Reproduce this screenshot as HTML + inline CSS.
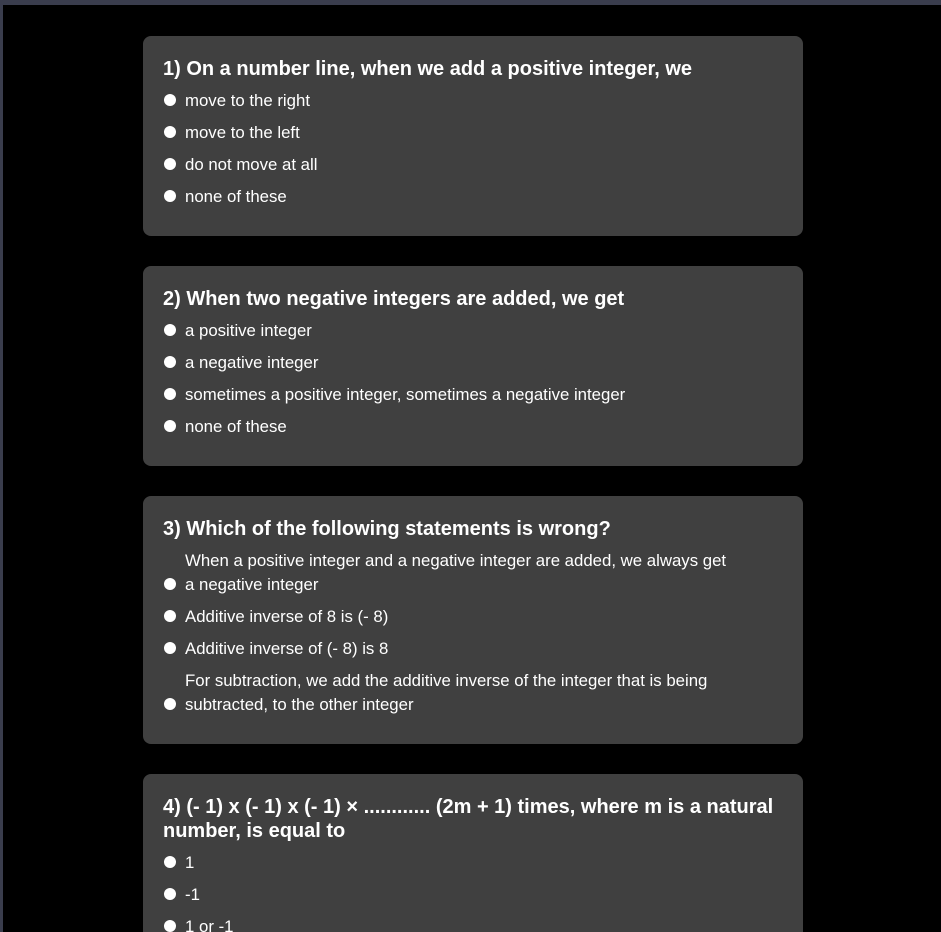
<!DOCTYPE html>
<html><head><meta charset="utf-8"><style>
*{margin:0;padding:0;box-sizing:border-box}
html,body{width:941px;height:932px;overflow:hidden;background:#000}
body{font-family:"Liberation Sans",sans-serif;color:#fff;position:relative}
.top{position:absolute;left:0;top:0;width:941px;height:5px;background:#3a3d4d}
.left{position:absolute;left:0;top:0;width:3px;height:932px;background:#3a3d4d}
.card{position:absolute;left:143px;width:660px;background:#404040;border-radius:8px;padding:20px 20px 28px 20px}
.t{font-size:20px;font-weight:bold;line-height:24px;margin-bottom:7px;white-space:nowrap;padding-top:1px}
.o{font-size:16.8px;line-height:24px;height:24px;margin-bottom:8px;white-space:nowrap;position:relative;padding-left:22px;padding-top:1px}
.o.r::before{content:"";position:absolute;left:1px;top:6px;width:12px;height:12px;border-radius:50%;background:#fff}
.o.two{height:48px}
.o.two::before{top:30px}
</style></head><body>
<div class="top"></div><div class="left"></div>
<div class="card" style="top:36px;height:200px">
<div class="t">1) On a number line, when we add a positive integer, we</div>
<div class="o r">move to the right</div>
<div class="o r">move to the left</div>
<div class="o r">do not move at all</div>
<div class="o r">none of these</div>
</div>
<div class="card" style="top:266px;height:200px">
<div class="t">2) When two negative integers are added, we get</div>
<div class="o r">a positive integer</div>
<div class="o r">a negative integer</div>
<div class="o r">sometimes a positive integer, sometimes a negative integer</div>
<div class="o r">none of these</div>
</div>
<div class="card" style="top:496px;height:248px">
<div class="t">3) Which of the following statements is wrong?</div>
<div class="o r two">When a positive integer and a negative integer are added, we always get<br>a negative integer</div>
<div class="o r">Additive inverse of 8 is (- 8)</div>
<div class="o r">Additive inverse of (- 8) is 8</div>
<div class="o r two">For subtraction, we add the additive inverse of the integer that is being<br>subtracted, to the other integer</div>
</div>
<div class="card" style="top:774px;height:200px">
<div class="t">4) (- 1) x (- 1) x (- 1) × ............ (2m + 1) times, where m is a natural<br>number, is equal to</div>
<div class="o r">1</div>
<div class="o r">-1</div>
<div class="o r">1 or -1</div>
</div>
</body></html>
